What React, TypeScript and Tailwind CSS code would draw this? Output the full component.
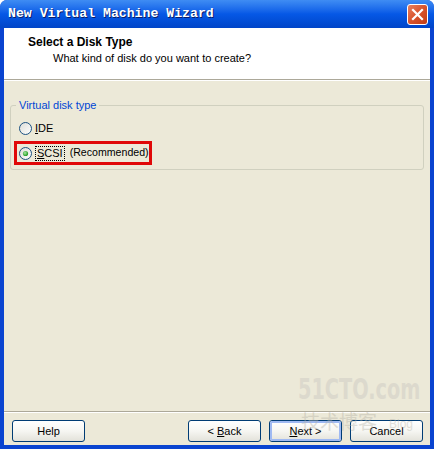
import React from "react";

function Radio({ checked }: { checked?: boolean }) {
  return (
    <svg width="13" height="13" viewBox="0 0 13 13" className="shrink-0">
      <defs>
        <linearGradient id={checked ? "rg1" : "rg0"} x1="0" y1="0" x2="1" y2="1">
          <stop offset="0" stopColor="#dcdcd6" />
          <stop offset="1" stopColor="#ffffff" />
        </linearGradient>
        <radialGradient id="dot" cx="0.4" cy="0.4" r="0.6">
          <stop offset="0" stopColor="#a6e8a0" />
          <stop offset="1" stopColor="#219b21" />
        </radialGradient>
      </defs>
      <circle cx="6.5" cy="6.5" r="6" fill={`url(#${checked ? "rg1" : "rg0"})`} stroke="#1c5180" strokeWidth="1" />
      {checked && <circle cx="6.5" cy="6.5" r="2.6" fill="url(#dot)" />}
    </svg>
  );
}

function Btn({ children, def }: { children: React.ReactNode; def?: boolean }) {
  return (
    <div className="w-[73px] h-[22px] rounded-[3px] border border-[#003c74] bg-gradient-to-b from-white via-[#f6f6f2] to-[#e3e2da] flex items-center justify-center">
      <div
        className={
          def
            ? "w-full h-full rounded-[2px] border-2 border-[#9fb9f2] flex items-center justify-center"
            : "w-full h-full flex items-center justify-center"
        }
      >
        <span className="text-[11px] text-black leading-none">{children}</span>
      </div>
    </div>
  );
}

export default function App() {
  return (
    <div
      className="w-[436px] h-[449px] bg-white relative overflow-hidden"
      style={{ fontFamily: '"Liberation Sans", Arial, sans-serif' }}
    >
      <div className="w-[434px] h-[449px] flex flex-col bg-[#0a44d0] rounded-tl-[7px] rounded-tr-[7px] overflow-hidden">
        {/* Title bar */}
        <div className="h-[28px] shrink-0 flex items-center pl-[8px] pr-[6px] bg-gradient-to-b from-[#3f8cf3] via-[#0658e6] to-[#0045c8]">
          <span
            className="flex-1 text-white font-bold text-[13.2px] [text-shadow:1px_1px_0_#0a1e6a]"
            style={{ fontFamily: '"Liberation Mono", "Courier New", monospace' }}
          >
            New Virtual Machine Wizard
          </span>
          <div className="w-[21px] h-[21px] rounded-[3px] border border-white bg-gradient-to-br from-[#e8805e] via-[#d8532c] to-[#c23c12] flex items-center justify-center">
            <svg width="13" height="13" viewBox="0 0 13 13">
              <path d="M2 2 L11 11 M11 2 L2 11" stroke="white" strokeWidth="2.2" strokeLinecap="square" />
            </svg>
          </div>
        </div>
        {/* Content */}
        <div className="flex-1 flex flex-col mx-[4px] mb-[4px] bg-[#ece9d8]">
          {/* Header */}
          <div className="h-[52px] shrink-0 bg-white border-b border-[#aca899] flex flex-col pl-[24px] pt-[6px]">
            <span className="text-[12px] font-bold text-black leading-[16px]">Select a Disk Type</span>
            <span className="text-[11px] text-black leading-[14px] pl-[25px] mt-[1px]">
              What kind of disk do you want to create?
            </span>
          </div>
          <div className="h-px bg-white shrink-0" />
          {/* Body */}
          <div className="flex-1 flex flex-col px-[6px] pt-[24px]">
            <div className="relative border border-[#d0d0bf] rounded-[3px] h-[65px] flex flex-col pl-[8px] pt-[14px]">
              <span className="absolute -top-[8px] left-[5px] px-[3px] bg-[#ece9d8] text-[11px] text-[#0046d5] leading-[14px]">
                Virtual disk type
              </span>
              <div className="flex items-center gap-[3px] h-[16px]">
                <Radio />
                <span className="text-[11px] text-black">
                  <span className="underline">I</span>DE
                </span>
              </div>
              <div className="mt-[5px] -ml-[5px] w-[138px] h-[24px] border-[3px] border-[#e00808] flex items-center pl-[2px] gap-[3px]">
                <Radio checked />
                <span className="text-[11px] text-black border border-dotted border-black px-px leading-[13px]">
                  <span className="underline">S</span>CSI
                </span>
                <span className="text-[10.6px] text-black ml-[2px]">(Recommended)</span>
              </div>
            </div>
            <div className="flex-1" />
          </div>
          {/* Separator */}
          <div className="h-px bg-[#aca899] shrink-0" />
          <div className="h-px bg-white shrink-0" />
          {/* Buttons */}
          <div className="h-[32px] shrink-0 flex items-start pt-[7px] pl-[8px] pr-[7px]">
            <Btn>Help</Btn>
            <div className="flex-1" />
            <div className="flex gap-[8px] pl-[1px]">
              <Btn>
                &lt; <span className="underline">B</span>ack
              </Btn>
              <Btn def>
                <span className="underline">N</span>ext &gt;
              </Btn>
              <Btn>Cancel</Btn>
            </div>
          </div>
        </div>
      </div>
      {/* Watermark */}
      <div className="absolute left-[298px] top-[374px] w-[132px] pointer-events-none flex flex-col items-start">
        <span
          className="text-[29px] font-bold text-[#dcd9cd] leading-[30px] origin-left scale-x-[0.74] whitespace-nowrap"
          style={{ fontFamily: '"DejaVu Sans Condensed", "DejaVu Sans", sans-serif' }}
        >
          51CTO.com
        </span>
        <div className="flex items-end gap-[12px] mt-[7px] opacity-40 pl-[3px]">
          <span
            className="text-[19px] text-[#b5b2a6] leading-[20px]"
            style={{ fontFamily: '"Noto Sans CJK SC", sans-serif' }}
          >
            技术博客
          </span>
          <span className="text-[12px] text-[#b5b2a6] leading-[14px]">Blog</span>
        </div>
      </div>
    </div>
  );
}
